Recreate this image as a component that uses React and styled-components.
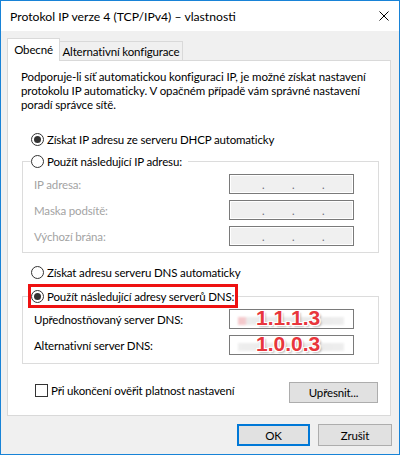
import React from 'react'
import styled, { createGlobalStyle } from 'styled-components'

const GlobalStyle = createGlobalStyle`
  html, body {
    margin: 0;
    padding: 0;
    background: #fff;
  }
  body {
    font-family: Lato, "Liberation Sans", sans-serif;
    font-size: 11.5px;
    letter-spacing: -0.15px;
    color: #000;
  }
  * {
    box-sizing: border-box;
  }
`

const Window = styled.div`
  width: 400px;
  height: 455px;
  border: 1px solid #1883d7;
  background: #f0f0f0;
  display: flex;
  flex-direction: column;
`

const TitleBar = styled.div`
  height: 30px;
  flex: 0 0 auto;
  background: #fff;
  display: flex;
  align-items: center;
  justify-content: space-between;
  padding: 0 10px 0 9px;
  font-size: 12.2px;
  letter-spacing: 0;
  white-space: nowrap;
`

const Body = styled.div`
  flex: 1 1 auto;
  padding: 7px 8px 0 6px;
  display: flex;
  flex-direction: column;
`

const TabRow = styled.div`
  height: 23px;
  display: flex;
  align-items: flex-end;
  margin-bottom: -1px;
  position: relative;
  z-index: 1;
`

const Tab = styled.div`
  height: ${p => (p.$active ? 23 : 20)}px;
  width: ${p => p.$width}px;
  background: ${p => (p.$active ? '#fff' : '#f0f0f0')};
  border: 1px solid #d9d9d9;
  border-bottom: ${p => (p.$active ? 'none' : '1px solid #d9d9d9')};
  border-left: ${p => (p.$active ? '1px solid #d9d9d9' : 'none')};
  display: flex;
  align-items: center;
  justify-content: center;
  white-space: nowrap;
  padding-bottom: ${p => (p.$active ? 2 : 0)}px;
`

const Panel = styled.div`
  height: 356px;
  flex: 0 0 auto;
  background: #fff;
  border: 1px solid #d9d9d9;
  padding: 9px 11px 0 14px;
  display: flex;
  flex-direction: column;
`

const Intro = styled.p`
  margin: 0 0 0 -1px;
  line-height: 14px;
  white-space: nowrap;
  letter-spacing: -0.1px;
`

const RadioRow = styled.label`
  display: flex;
  align-items: center;
  gap: 3px;
  height: ${p => p.$h || 16}px;
  margin: ${p => p.$m || '0'};
  white-space: nowrap;
`

const RadioCircle = styled.span`
  width: 13px;
  height: 13px;
  border: 1px solid #333;
  border-radius: 50%;
  background: #fff;
  display: flex;
  align-items: center;
  justify-content: center;
  flex: 0 0 auto;
  &::after {
    content: '';
    width: 7px;
    height: 7px;
    border-radius: 50%;
    background: #333;
    display: ${p => (p.$checked ? 'block' : 'none')};
  }
`

const Group = styled.fieldset`
  margin: ${p => p.$m};
  padding: 0;
  border: 1px solid #dcdcdc;
  min-inline-size: 0;
`

const Legend = styled.legend`
  padding: 0 6px 0 0;
  margin-left: 8px;
`

const MarkedLegend = styled.legend`
  padding: 0 1px 0 0;
  margin-left: 5px;
  border: 3px solid #ee1111;
`

const FieldGrid = styled.div`
  display: grid;
  grid-template-columns: 1fr 125px;
  grid-auto-rows: 20px;
  row-gap: 6px;
  align-items: center;
  padding: ${p => p.$pad};
  white-space: nowrap;
`

const FieldLabel = styled.span`
  color: ${p => (p.$disabled ? '#a3a3a3' : '#000')};
`

const IpField = styled.div`
  height: 20px;
  border: 1px solid #7a7a7a;
  background: ${p => (p.$disabled ? '#f0f0f0' : '#fff')};
  box-shadow: ${p => (p.$disabled ? 'inset 0 0 0 1px #fff' : 'none')};
  display: flex;
  align-items: ${p => (p.$disabled ? 'flex-end' : 'center')};
  padding-left: ${p => (p.$disabled ? 32 : 8)}px;
  position: relative;
`

const Dot = styled.span`
  width: 30px;
  line-height: 16px;
  color: #6a6a7a;
  font-size: 11px;
`

const Smudge = styled.span`
  display: block;
  width: 106px;
  height: 8px;
  margin-top: 4px;
  background: linear-gradient(90deg, ${p => p.$pink ? '#f4c9cc 0, #f4c9cc 7px, #ececec 9px' : '#eeeeee 0'}, #e9e9e9 60%, #eeeeee 100%);
  filter: blur(1px);
`

const Annotation = styled.span`
  position: absolute;
  left: 26px;
  top: -3px;
  font-family: "Liberation Sans", Arial, sans-serif;
  font-weight: bold;
  font-size: 21px;
  line-height: 21px;
  letter-spacing: 0;
  color: #e8363c;
  text-shadow:
    1px 0 0 #fff, -1px 0 0 #fff, 0 1px 0 #fff, 0 -1px 0 #fff,
    1px 1px 0 #fff, -1px -1px 0 #fff, 1px -1px 0 #fff, -1px 1px 0 #fff,
    2px 2px 2px rgba(0, 0, 0, 0.25);
`

const BottomRow = styled.div`
  display: flex;
  align-items: flex-start;
  justify-content: space-between;
  margin: 18px 1px 0 13px;
`

const CheckLabel = styled.label`
  display: flex;
  align-items: center;
  gap: 3px;
  height: 14px;
  margin-top: 1px;
`

const CheckBox = styled.span`
  width: 13px;
  height: 13px;
  border: 1px solid #333;
  background: #fff;
`

const Button = styled.button`
  font-family: inherit;
  font-size: 11.5px;
  letter-spacing: inherit;
  color: #000;
  width: ${p => p.$width}px;
  height: ${p => p.$height}px;
  background: #e1e1e1;
  border: ${p => (p.$default ? '2px solid #0078d7' : '1px solid #adadad')};
  padding: 0;
  margin: 0;
`

const Footer = styled.div`
  display: flex;
  justify-content: flex-end;
  gap: 8px;
  margin: 8px -1px 0 0;
`

function CloseIcon() {
  return (
    <svg width="10" height="10" viewBox="0 0 10 10">
      <path d="M0.5 0.5 L9.5 9.5 M9.5 0.5 L0.5 9.5" stroke="#000" strokeWidth="1" fill="none" />
    </svg>
  )
}

function Radio({ checked, children, ...rest }) {
  return (
    <RadioRow {...rest}>
      <RadioCircle $checked={checked} />
      <span>{children}</span>
    </RadioRow>
  )
}

function DisabledIp() {
  return (
    <IpField $disabled>
      <Dot>.</Dot>
      <Dot>.</Dot>
      <Dot>.</Dot>
    </IpField>
  )
}

function DnsField({ value, pink }) {
  return (
    <IpField>
      <Smudge $pink={pink} />
      <Annotation>{value}</Annotation>
    </IpField>
  )
}

export default function App() {
  return (
    <>
      <GlobalStyle />
      <Window>
        <TitleBar>
          <span>Protokol IP verze 4 (TCP/IPv4) – vlastnosti</span>
          <CloseIcon />
        </TitleBar>
        <Body>
          <TabRow>
            <Tab $active $width={53}>Obecné</Tab>
            <Tab $width={123}>Alternativní konfigurace</Tab>
          </TabRow>
          <Panel>
            <Intro>
              Podporuje-li síť automatickou konfiguraci IP, je možné získat nastavení
              <br />
              protokolu IP automaticky. V opačném případě vám správné nastavení
              <br />
              poradí správce sítě.
            </Intro>
            <Radio checked $m="19px 0 0 9px">Získat IP adresu ze serveru DHCP automaticky</Radio>
            <Group $m="6px 0 0 0">
              <Legend>
                <Radio>Použít následující IP adresu:</Radio>
              </Legend>
              <FieldGrid $pad="5px 24px 6px 11px">
                <FieldLabel $disabled>IP adresa:</FieldLabel>
                <DisabledIp />
                <FieldLabel $disabled>Maska podsítě:</FieldLabel>
                <DisabledIp />
                <FieldLabel $disabled>Výchozí brána:</FieldLabel>
                <DisabledIp />
              </FieldGrid>
            </Group>
            <Radio $m="11px 0 0 9px">Získat adresu serveru DNS automaticky</Radio>
            <Group $m="4px 0 0 0">
              <MarkedLegend>
                <Radio checked $h={18}>Použít následující adresy serverů DNS:</Radio>
              </MarkedLegend>
              <FieldGrid $pad="1px 24px 8px 11px">
                <FieldLabel>Upřednostňovaný server DNS:</FieldLabel>
                <DnsField value="1.1.1.3" pink />
                <FieldLabel>Alternativní server DNS:</FieldLabel>
                <DnsField value="1.0.0.3" />
              </FieldGrid>
            </Group>
            <BottomRow>
              <CheckLabel>
                <CheckBox />
                <span>Při ukončení ověřit platnost nastavení</span>
              </CheckLabel>
              <Button $width={89} $height={21}>Upřesnit...</Button>
            </BottomRow>
          </Panel>
          <Footer>
            <Button $default $width={73} $height={22}>OK</Button>
            <Button $width={74} $height={22}>Zrušit</Button>
          </Footer>
        </Body>
      </Window>
    </>
  )
}
